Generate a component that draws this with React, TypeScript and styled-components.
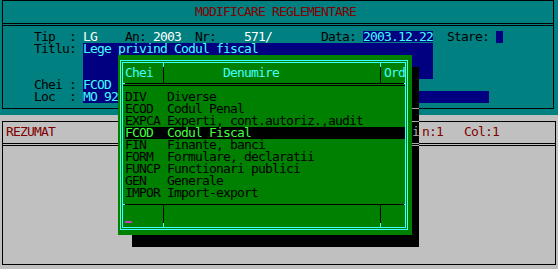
import React from "react"
import styled, { createGlobalStyle } from "styled-components"

const C = {
  teal: "#008080",
  blue: "#000080",
  green: "#008000",
  gray: "#c0c0c0",
  red: "#800000",
  cyan: "#40ffff",
  lime: "#40ff40",
  white: "#ffffff",
  black: "#000000",
  magenta: "#c040c0",
  shade: "#a8a8a8",
}

// one text cell is 7px wide and 12px high
const CW = 7
const RH = 12

const GlobalStyle = createGlobalStyle`
  html, body {
    margin: 0;
    padding: 0;
    background: ${C.gray};
  }
  body {
    font-family: "DejaVu Sans Mono", "Liberation Mono", monospace;
    font-size: 13px;
    letter-spacing: -0.826px;
  }
`

const Screen = styled.div`
  position: relative;
  width: 558px;
  height: 269px;
  overflow: hidden;
  line-height: ${RH}px;
`

/**
 * Top form (teal)
 */

const TopPanel = styled.div`
  height: 115px;
  background: ${C.teal};
`

const TopFrame = styled.div`
  box-sizing: border-box;
  margin-left: 2px;
  width: 552px;
  height: 109px;
  border: 1px solid ${C.black};
`

const Title = styled.div`
  margin-top: 5px;
  height: ${RH}px;
  padding-left: 192px;
  color: ${C.red};
  white-space: pre;
`

const DoubleRule = styled.div<{ $gap?: number }>`
  box-sizing: border-box;
  margin-top: ${(p) => p.$gap ?? 5}px;
  height: 3px;
  border-top: 1px solid ${C.black};
  border-bottom: 1px solid ${C.black};
`

const FormRow = styled.div<{ $rows?: number; $gap?: number }>`
  display: flex;
  margin-top: ${(p) => p.$gap ?? 0}px;
  height: ${(p) => (p.$rows ?? 1) * RH}px;
  padding-left: 31px;
  color: ${C.black};
  white-space: pre;
`

const Value = styled.span`
  color: ${C.white};
`

const Field = styled.span<{ $cols: number; $h?: number }>`
  display: inline-block;
  vertical-align: top;
  width: ${(p) => p.$cols * CW}px;
  height: ${(p) => p.$h ?? RH}px;
  background: ${C.blue};
  color: ${C.cyan};
`

/**
 * Bottom memo (gray)
 */

const BottomPanel = styled.div`
  box-sizing: border-box;
  height: 154px;
  padding-top: 6px;
  background: ${C.gray};
`

const MemoBox = styled.div`
  box-sizing: border-box;
  margin-left: 2px;
  width: 554px;
  height: 144px;
  border: 1px solid ${C.black};
`

const MemoHead = styled.div`
  display: flex;
  margin-top: 4px;
  height: ${RH}px;
  padding: 0 56px 0 3px;
  color: ${C.red};
  white-space: pre;
`

const CursorPos = styled.span`
  margin-left: auto;
`

/**
 * Lookup popup (green)
 */

const Shadow = styled.div`
  position: absolute;
  left: 132px;
  top: 67px;
  width: 287px;
  height: 180px;
  background:
    linear-gradient(
      to bottom,
      transparent 41px,
      ${C.shade} 41px 42px,
      transparent 42px 54px,
      ${C.shade} 54px 55px,
      transparent 55px 76px,
      ${C.shade} 76px 77px,
      transparent 77px 78px,
      ${C.shade} 78px 79px,
      transparent 79px
    ),
    ${C.black};
`

const ShadowGlyph = styled.span`
  position: absolute;
  left: 280px;
  top: 59px;
  color: ${C.shade};
`

const Popup = styled.div`
  position: absolute;
  left: 118px;
  top: 55px;
  box-sizing: border-box;
  width: 294px;
  height: 180px;
  padding: 5px 4px 5px 2px;
  background: ${C.green};
`

const PopupFrame = styled.div`
  box-sizing: border-box;
  height: 100%;
  border: 3px double ${C.cyan};
  display: flex;
  flex-direction: column;
`

const Columns = styled.div<{ $h: number }>`
  display: grid;
  grid-template-columns: 40px 217px 25px;
  height: ${(p) => p.$h}px;
`

const Cell = styled.div<{ $sep?: boolean; $pad: number; $tick: "top" | "bottom" }>`
  position: relative;
  padding-left: ${(p) => p.$pad}px;
  padding-top: ${(p) => (p.$tick === "top" ? 4 : 0)}px;
  color: ${C.cyan};
  white-space: pre;
  border-left: ${(p) => (p.$sep ? `1px solid ${C.black}` : "none")};

  &::before {
    content: "";
    display: ${(p) => (p.$sep ? "block" : "none")};
    position: absolute;
    left: -1px;
    width: 1px;
    height: 4px;
    background: ${C.cyan};
    ${(p) => (p.$tick === "top" ? "top: 0;" : "bottom: 0;")}
  }
`

const Rule = styled.div<{ $double?: boolean; $gap: number }>`
  position: relative;
  box-sizing: border-box;
  margin-top: ${(p) => p.$gap}px;
  height: ${(p) => (p.$double ? 3 : 1)}px;
  border-top: 1px solid ${C.black};
  border-bottom: ${(p) => (p.$double ? `1px solid ${C.black}` : "none")};

  &::before,
  &::after {
    content: "";
    position: absolute;
    top: -1px;
    height: 1px;
    background: ${C.cyan};
  }
  &::before {
    left: 0;
    width: 2px;
  }
  &::after {
    right: 0;
    width: 1px;
  }
`

const List = styled.div`
  padding-top: 5px;
`

const Item = styled.div<{ $active?: boolean }>`
  display: flex;
  margin-left: 2px;
  height: ${RH}px;
  white-space: pre;
  background: ${(p) => (p.$active ? C.black : "transparent")};
  color: ${(p) => (p.$active ? C.lime : C.black)};
`

const Key = styled.span`
  flex: 0 0 ${6 * CW}px;
`

const Cursor = styled.span`
  display: block;
  margin: 16px 0 0 2px;
  width: ${CW}px;
  height: 2px;
  background: ${C.magenta};
`

const keys = [
  { key: "DIV", name: "Diverse" },
  { key: "ECOD", name: "Codul Penal" },
  { key: "EXPCA", name: "Experti, cont.autoriz.,audit" },
  { key: "FCOD", name: "Codul Fiscal", active: true },
  { key: "FIN", name: "Finante, banci" },
  { key: "FORM", name: "Formulare, declaratii" },
  { key: "FUNCP", name: "Functionari publici" },
  { key: "GEN", name: "Generale" },
  { key: "IMPOR", name: "Import-export" },
]

export default function App() {
  return (
    <>
      <GlobalStyle />
      <Screen>
        <TopPanel>
          <TopFrame>
            <Title>MODIFICARE REGLEMENTARE</Title>
            <DoubleRule />
            <FormRow $gap={5}>
              <span>
                {"Tip  : "}
                <Value>LG</Value>
                {"    An: "}
                <Value>2003</Value>
                {"  Nr:    "}
                <Value>571/</Value>
                {"       Data: "}
                <Field $cols={10} $h={11}>2003.12.22</Field>
                {"  Stare: "}
                <Field $cols={1} />
              </span>
            </FormRow>
            <FormRow $rows={3}>
              <span>{"Titlu: "}</span>
              <Field $cols={50} $h={36}>Lege privind Codul fiscal</Field>
            </FormRow>
            <FormRow>
              <span>{"Chei : "}</span>
              <Field $cols={5}>FCOD</Field>
            </FormRow>
            <FormRow>
              <span>{"Loc  : "}</span>
              <Field $cols={58}>MO 92</Field>
            </FormRow>
          </TopFrame>
        </TopPanel>

        <BottomPanel>
          <MemoBox>
            <MemoHead>
              <span>REZUMAT</span>
              <CursorPos>{"n:1   Col:1"}</CursorPos>
            </MemoHead>
            <DoubleRule />
          </MemoBox>
        </BottomPanel>

        <Shadow>
          <ShadowGlyph>i</ShadowGlyph>
        </Shadow>

        <Popup>
          <PopupFrame>
            <Columns $h={20}>
              <Cell $pad={2} $tick="top">Chei</Cell>
              <Cell $sep $pad={59} $tick="top">Denumire</Cell>
              <Cell $sep $pad={3} $tick="top">Ord</Cell>
            </Columns>
            <Rule $double $gap={0} />
            <List>
              {keys.map((k) => (
                <Item key={k.key} $active={k.active}>
                  <Key>{k.key}</Key>
                  <span>{k.name}</span>
                </Item>
              ))}
            </List>
            <Rule $gap={5} />
            <Columns $h={22}>
              <Cell $pad={0} $tick="bottom">
                <Cursor />
              </Cell>
              <Cell $sep $pad={0} $tick="bottom" />
              <Cell $sep $pad={0} $tick="bottom" />
            </Columns>
          </PopupFrame>
        </Popup>
      </Screen>
    </>
  )
}
